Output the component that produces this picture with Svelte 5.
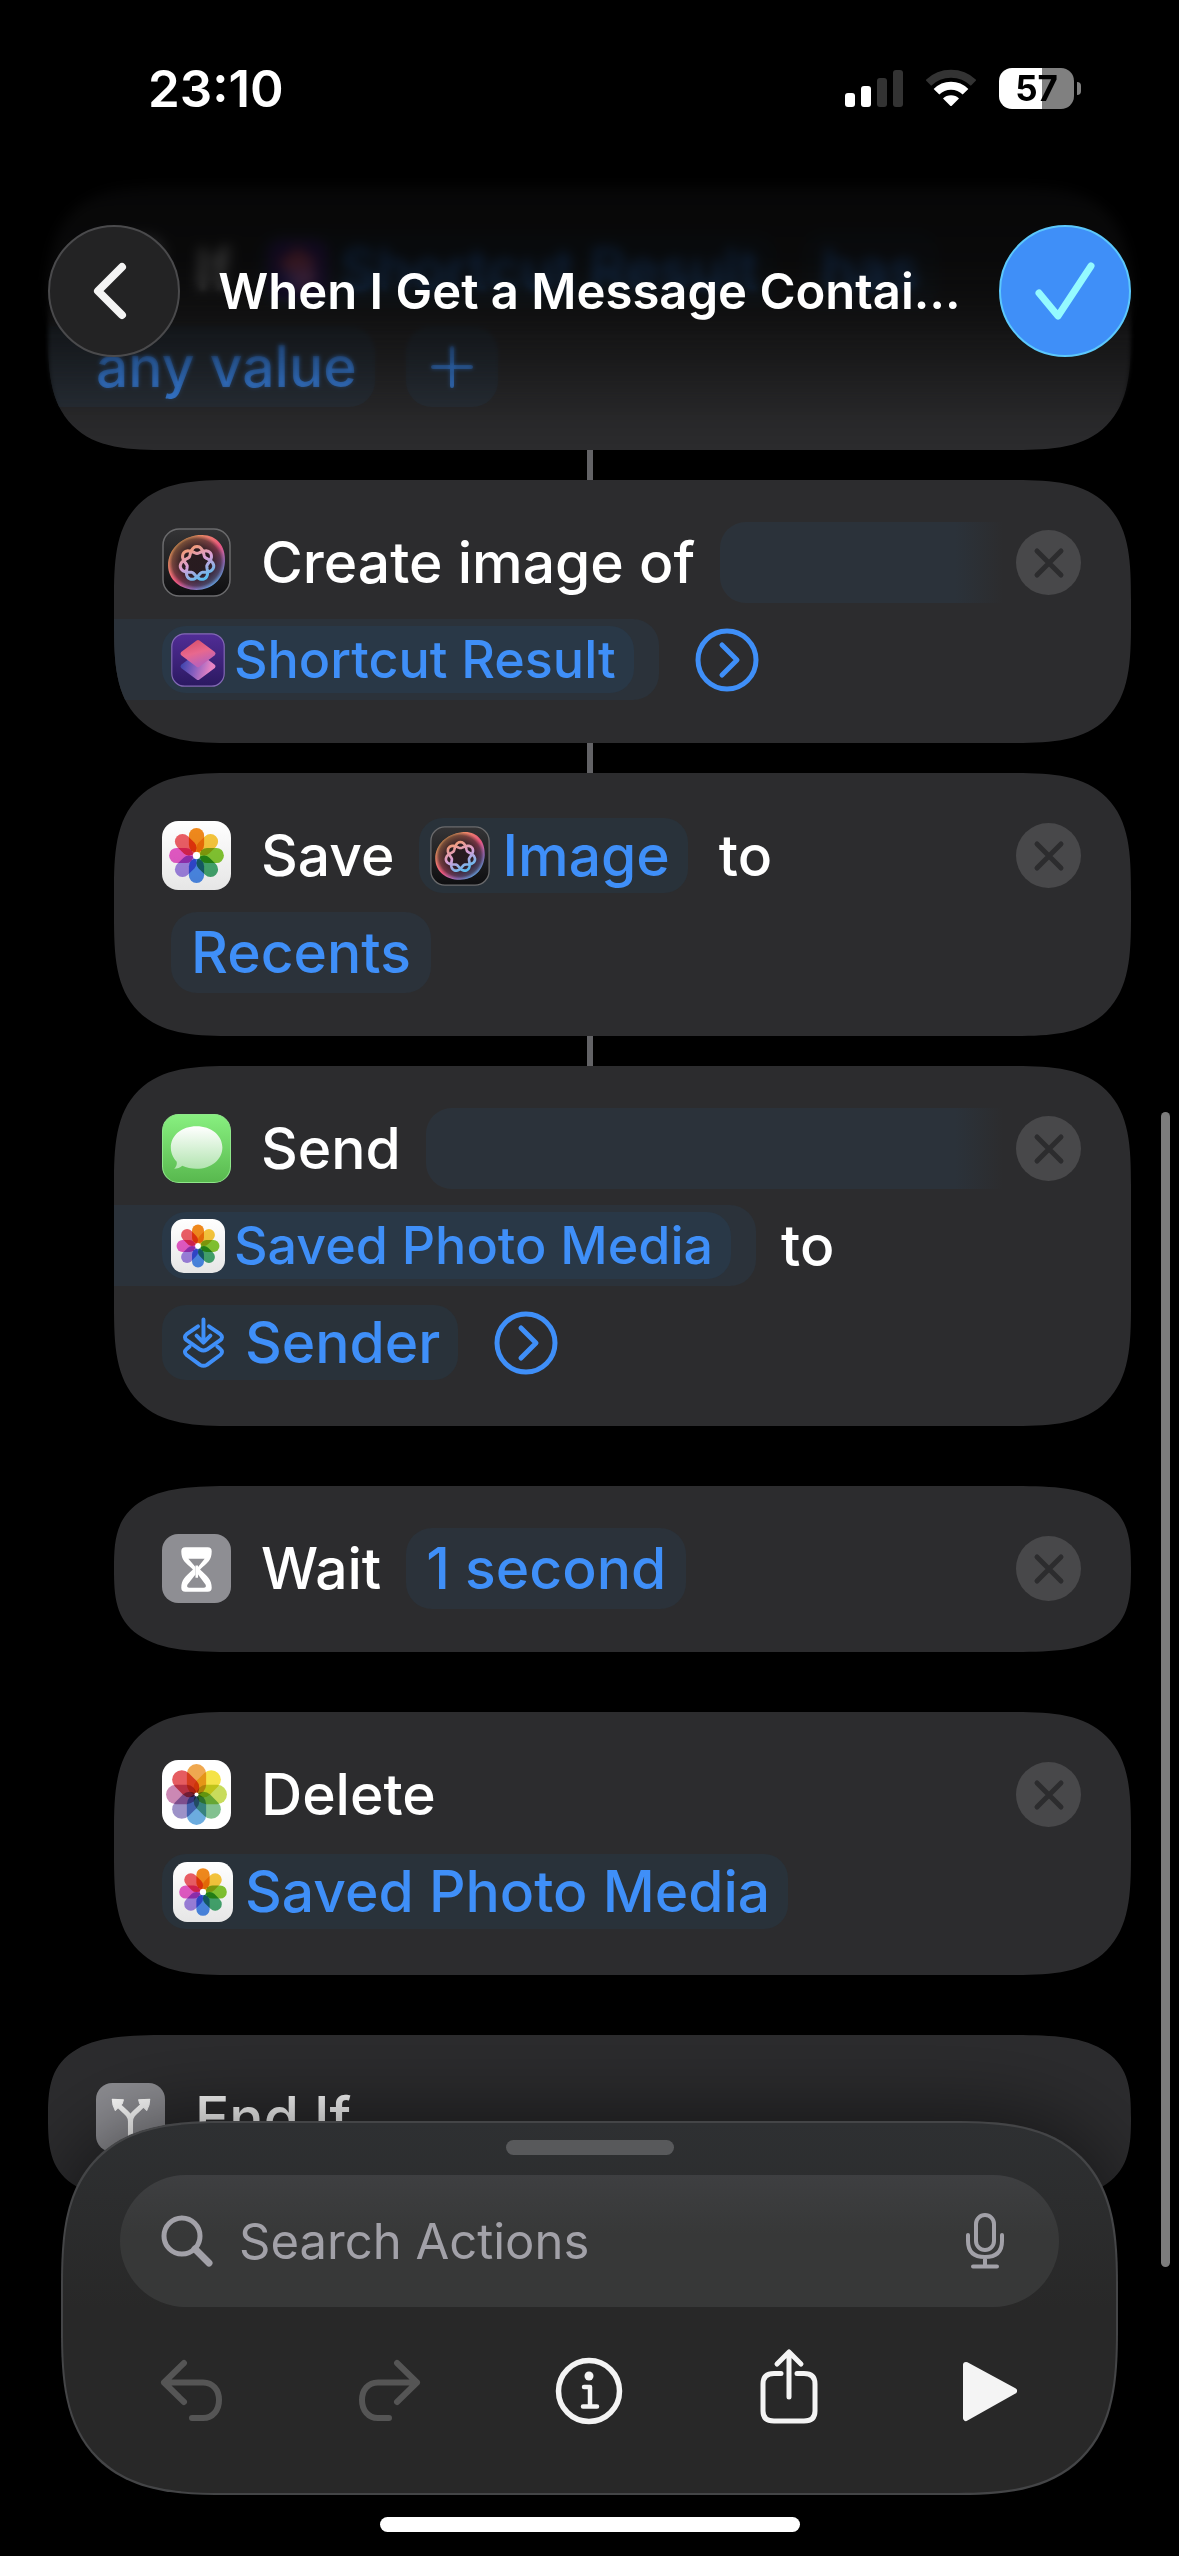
<script lang="ts">
    type Part = {
        kind: "icon" | "text" | "token" | "field" | "open" | "rest" | "more" | "plus" | "tail";
        label?: string;
        icon?: string;
    };
    type Action = { name: string; rows: Part[][]; outer?: boolean; linked?: boolean; fixed?: boolean };

    const actions: Action[] = [
        {
            name: "If",
            outer: true,
            linked: true,
            fixed: true,
            rows: [
                [
                    { kind: "icon", icon: "branch" },
                    { kind: "text", label: "If" },
                    { kind: "token", icon: "shortcuts", label: "Shortcut Result" },
                    { kind: "field", label: "has" },
                ],
                [
                    { kind: "tail", label: "any value" },
                    { kind: "plus", label: "Add condition" },
                ],
            ],
        },
        {
            name: "Create image",
            linked: true,
            rows: [
                [{ kind: "icon", icon: "playground" }, { kind: "text", label: "Create image of" }, { kind: "open" }],
                [{ kind: "rest", icon: "shortcuts", label: "Shortcut Result" }, { kind: "more" }],
            ],
        },
        {
            name: "Save",
            linked: true,
            rows: [
                [
                    { kind: "icon", icon: "photos" },
                    { kind: "text", label: "Save" },
                    { kind: "token", icon: "playground", label: "Image" },
                    { kind: "text", label: "to" },
                ],
                [{ kind: "field", label: "Recents" }],
            ],
        },
        {
            name: "Send",
            rows: [
                [{ kind: "icon", icon: "messages" }, { kind: "text", label: "Send" }, { kind: "open" }],
                [
                    { kind: "rest", icon: "photos", label: "Saved Photo Media" },
                    { kind: "text", label: "to" },
                ],
                [{ kind: "token", icon: "input", label: "Sender" }, { kind: "more" }],
            ],
        },
        {
            name: "Wait",
            rows: [
                [
                    { kind: "icon", icon: "hourglass" },
                    { kind: "text", label: "Wait" },
                    { kind: "field", label: "1 second" },
                ],
            ],
        },
        {
            name: "Delete",
            rows: [
                [
                    { kind: "icon", icon: "photosClassic" },
                    { kind: "text", label: "Delete" },
                ],
                [{ kind: "token", icon: "photos", label: "Saved Photo Media" }],
            ],
        },
        {
            name: "End If",
            outer: true,
            fixed: true,
            rows: [
                [
                    { kind: "icon", icon: "branch" },
                    { kind: "text", label: "End If" },
                ],
            ],
        },
    ];

    const petals = ["#f28a1c", "#f8c73c", "#84c832", "#45a970", "#4d8cec", "#a184e4", "#e75bc8", "#ee5f66"];
    const classicPetals = ["#efa850", "#f5e348", "#c8dc5c", "#82c190", "#6cacdf", "#9d92c8", "#cb88b4", "#e55c60"];

    // Seven-lobed knot: one strand that goes round twice
    const knot =
        "M" +
        Array.from({ length: 141 }, (_, i) => {
            const t = (i / 140) * Math.PI * 4;
            const r = 13.4 + 3.4 * Math.cos(3.5 * t);
            return `${(34.5 + r * Math.sin(t)).toFixed(1)} ${(35 - r * Math.cos(t)).toFixed(1)}`;
        }).join("L") +
        "Z";

    let query = $state("");
</script>

{#snippet appIcon(name: string)}
    <svg class="app-icon" viewBox="0 0 68 68" aria-hidden="true">
        {#if name === "playground"}
            <rect x="1" y="1" width="66" height="66" rx="16" fill="url(#night)" stroke="#6a6a6c" stroke-width="1.5" />
            <path d="M36 7C53 5 63 17 62 33C61 51 49 61 34 61C18 61 6 51 6 37C6 21 19 9 36 7Z" fill="url(#aura)" />
            <path d="M36 7C53 5 63 17 62 33C61 51 49 61 34 61C18 61 6 51 6 37C6 21 19 9 36 7Z" fill="url(#core)" />
            <path d={knot} fill="none" stroke="url(#strand)" stroke-width="3" />
        {:else if name === "shortcuts"}
            <rect x="1" y="1" width="66" height="66" rx="16" fill="url(#violet)" stroke="#8268b4" stroke-width="1.5" />
            <path d="M34 28L53 42L34 56L15 42Z" fill="url(#lower)" stroke="url(#lower)" stroke-width="6" stroke-linejoin="round" />
            <path d="M34 12L53 26L34 40L15 26Z" fill="url(#upper)" stroke="url(#upper)" stroke-width="6" stroke-linejoin="round" />
        {:else if name === "photos"}
            <rect width="68" height="68" rx="16" fill="url(#paper)" />
            {#each petals as color, i}
                <rect class="petal" x="26.5" y="7" width="15" height="24" rx="7.5" fill={color} transform="rotate({i * 45} 34 34)" />
            {/each}
            <circle cx="34" cy="34" r="3.5" fill="#fff" />
        {:else if name === "photosClassic"}
            <rect width="68" height="68" rx="16" fill="#fff" />
            {#each classicPetals as color, i}
                <rect class="petal" x="24.5" y="4" width="19" height="30" rx="9.5" fill={color} transform="rotate({i * 45} 34 34)" />
            {/each}
            <circle cx="34" cy="34" r="2" fill="#fff" />
        {:else if name === "messages"}
            <rect x="0.5" y="0.5" width="67" height="67" rx="16" fill="url(#green)" stroke="#8fe78a" />
            <path
                d="M34 12C48.500 12 59.500 21 59.500 33C59.500 45 48.500 54 34 54C29 54 24 53 20 51C18 53 15 54 12 54C14 52 15 49.500 14.500 47C11 43.500 8.700 38.500 8.700 33C8.700 21 19.500 12 34 12Z"
                fill="url(#bubble)"
            />
        {:else if name === "hourglass"}
            <rect width="68" height="68" rx="16" fill="#8e8e93" />
            <path
                fill="#fff"
                fill-rule="evenodd"
                d="M23 13H45Q49 13 49 17C49 26 45 28 37.500 35C45 42 49 45 49 53Q49 57 45 57H23Q19 57 19 53C19 45 23 42 30.500 35C23 28 19 26 19 17Q19 13 23 13ZM26 24.500L33 32.500V40L25 50Q24 53 27 53H41Q44 53 43 50L35.500 40V32.500L42 24.500Z"
            />
            <path fill="#fff" d="M33 31h2.500v12H33z" />
        {:else if name === "branch"}
            <rect width="68" height="68" rx="16" fill="#8e8e93" />
            <path d="M34 57V38C34 31 28 28 22 22M34 38C34 31 40 28 46 22" fill="none" stroke="#fff" stroke-width="5" />
            <path d="M16 16L27 16.500L26 20L21 25L19 27Q16 22 16 16ZM53 16L42 16.500L43 20L48 25L50 27Q53 22 53 16Z" fill="#fff" stroke="#fff" stroke-linejoin="round" />
        {:else if name === "input"}
            <g class="line" stroke-width="4" transform="translate(11 5) scale(1.12)">
                <path d="M21 2V25M14 18.500L21 25.500L28 18.500" />
                <path d="M15.500 9L4 17Q.5 20 4 23L17.500 32.500Q21 34.500 24.500 32.500L38 23Q41.500 20 38 17L26.500 9" />
                <path d="M7 29.500L4 32Q.5 35 4 38L17.500 48Q21 50 24.500 48L38 38Q41.500 35 38 32L35 29.500" />
            </g>
        {/if}
    </svg>
{/snippet}

<svg class="defs" width="0" height="0" aria-hidden="true">
    <defs>
        <linearGradient id="night" x2="0" y2="1"><stop stop-color="#343436" /><stop offset="1" stop-color="#0e0e10" /></linearGradient>
        <linearGradient id="aura" x1="0.1" y1="0.2" x2="0.8" y2="1">
            <stop stop-color="#f0a35a" /><stop offset="0.5" stop-color="#e8557e" /><stop offset="0.75" stop-color="#9a6fc0" /><stop offset="1" stop-color="#4fb2ea" />
        </linearGradient>
        <radialGradient id="core">
            <stop offset="0.45" stop-color="#241a1e" stop-opacity="0.98" /><stop offset="0.85" stop-color="#241a1e" stop-opacity="0.6" /><stop offset="1" stop-color="#241a1e" stop-opacity="0" />
        </radialGradient>
        <linearGradient id="strand" x1="0.2" y1="0" x2="0.7" y2="1">
            <stop stop-color="#f59a6a" /><stop offset="0.5" stop-color="#d9a0d8" /><stop offset="1" stop-color="#58bdf0" />
        </linearGradient>
        <linearGradient id="violet" x2="0" y2="1"><stop stop-color="#512d96" /><stop offset="1" stop-color="#2b1961" /></linearGradient>
        <linearGradient id="upper" x2="0.4" y2="1"><stop stop-color="#d9506c" /><stop offset="0.55" stop-color="#e8688e" /><stop offset="1" stop-color="#c062b4" /></linearGradient>
        <linearGradient id="lower" x2="1" y2="0.2"><stop stop-color="#3a44ac" /><stop offset="0.5" stop-color="#8b60c0" /><stop offset="1" stop-color="#e884c4" /></linearGradient>
        <linearGradient id="paper" x2="0" y2="1"><stop stop-color="#fff" /><stop offset="1" stop-color="#e6e6e6" /></linearGradient>
        <linearGradient id="green" x2="0" y2="1"><stop stop-color="#88f080" /><stop offset="1" stop-color="#58b84e" /></linearGradient>
        <linearGradient id="bubble" x2="0" y2="1"><stop stop-color="#fff" /><stop offset="1" stop-color="#b2e4b0" /></linearGradient>
    </defs>
</svg>

<header>
    <div class="status">
        <time>23:10</time>
        <div class="signals">
            <svg width="58" height="38" viewBox="0 0 58 38" role="img" aria-label="Signal, 2 of 4 bars">
                <g fill="#fff">
                    <rect y="24" width="10" height="14" rx="3" />
                    <rect x="16" y="17" width="10" height="21" rx="3" />
                    <rect x="32" y="9" width="10" height="29" rx="3" opacity="0.2" />
                    <rect x="48" y="1" width="10" height="37" rx="3" opacity="0.2" />
                </g>
            </svg>
            <svg width="50" height="38" viewBox="0 0 50 38" role="img" aria-label="Wi-Fi">
                <g class="arcs" stroke="#fff" stroke-width="8">
                    <path d="M2.400 14A32.500 32.500 0 0 1 47.600 14" opacity="0.2" />
                    <path d="M10.500 22.800A20.400 20.400 0 0 1 39.500 22.800" />
                </g>
                <path d="M17 29.500A11.300 11.300 0 0 1 33 29.500L26 36.500Q25 37.500 24 36.500Z" fill="#fff" />
            </svg>
            <div class="battery"><span>57</span></div>
        </div>
    </div>
    <nav>
        <button class="round back" aria-label="Back">
            <svg width="34" height="58" viewBox="0 0 34 58"><path d="M29 5L5 29L29 53" /></svg>
        </button>
        <h1>When I Get a Message Contai…</h1>
        <button class="round done" aria-label="Done">
            <svg width="60" height="58" viewBox="0 0 60 58"><path d="M4 31L23 54L56 4" /></svg>
        </button>
    </nav>
</header>

<main>
    {#each actions as action}
        <section class="card" class:outer={action.outer} class:linked={action.linked} aria-label={action.name}>
            <div class="body">
                {#each action.rows as row, i}
                    <div class="row">
                        {#each row as part}
                            {#if part.kind === "icon"}
                                <span class="lead">{@render appIcon(part.icon)}</span>
                            {:else if part.kind === "text"}
                                <span class="word">{part.label}</span>
                            {:else if part.kind === "token"}
                                <button class="token">{@render appIcon(part.icon)}{part.label}</button>
                            {:else if part.kind === "field"}
                                <button class="field">{part.label}</button>
                            {:else if part.kind === "tail"}
                                <button class="field tail">{part.label}</button>
                            {:else if part.kind === "open"}
                                <span class="open"></span>
                            {:else if part.kind === "rest"}
                                <span class="rest">
                                    <button class="token small">{@render appIcon(part.icon)}{part.label}</button>
                                </span>
                            {:else if part.kind === "plus"}
                                <button class="field plus" aria-label={part.label}>
                                    <svg width="42" height="42" viewBox="0 0 42 42"><path d="M21 2V40M2 21H40" /></svg>
                                </button>
                            {:else}
                                <button class="more" aria-label="Show more">
                                    <svg width="64" height="64" viewBox="0 0 64 64">
                                        <circle cx="32" cy="32" r="29" />
                                        <path d="M27 17L42 32L27 47" />
                                    </svg>
                                </button>
                            {/if}
                        {/each}
                        {#if i === 0 && !action.fixed}
                            <button class="remove" aria-label="Remove {action.name}">
                                <svg width="32" height="32" viewBox="0 0 32 32"><path d="M4 4L28 28M28 4L4 28" /></svg>
                            </button>
                        {/if}
                    </div>
                {/each}
            </div>
        </section>
    {/each}
</main>

<div class="scrollbar"></div>

<footer>
    <div class="dock">
        <div class="grabber"></div>
        <label class="search">
            <svg width="54" height="54" viewBox="0 0 54 54" aria-hidden="true">
                <circle cx="22" cy="22" r="18" stroke-width="5" />
                <path d="M35 35L49 49" stroke-width="7" />
            </svg>
            <input type="text" placeholder="Search Actions" aria-label="Search Actions" bind:value={query} />
            <svg width="40" height="56" viewBox="0 0 40 56" aria-hidden="true" stroke-width="4">
                <rect x="11" y="2" width="18" height="35" rx="9" />
                <path d="M3 22V28Q3 44 20 44Q37 44 37 28V22M20 44V52M8 53.500H32" />
            </svg>
        </label>
        <div class="toolbar">
            <button aria-label="Undo" disabled>
                <svg width="64" height="64" viewBox="0 0 64 64"><path d="M25 4L5 23.500L25 43M5 23.500H44C54 23.500 60 31 60 41S54 59 44 59H33" /></svg>
            </button>
            <button aria-label="Redo" disabled>
                <svg width="64" height="64" viewBox="0 0 64 64"><path d="M39 4L59 23.500L39 43M59 23.500H20C10 23.500 4 31 4 41S10 59 20 59H31" /></svg>
            </button>
            <button aria-label="Info">
                <svg width="68" height="68" viewBox="0 0 68 68">
                    <circle cx="34" cy="34" r="30.500" stroke-width="5.500" />
                    <circle cx="34" cy="19" r="4.500" class="solid" stroke="none" />
                    <path d="M29 30H35V49M28 49.500H42" stroke-width="4.500" />
                </svg>
            </button>
            <button aria-label="Share">
                <svg width="64" height="92" viewBox="0 0 64 92">
                    <path d="M24 28.500H17Q6 28.500 6 39V66Q6 76 17 76H47Q58 76 58 66V39Q58 28.500 47 28.500H40M32 52V8M20 19L32 7L44 19" stroke-width="5" />
                </svg>
            </button>
            <button aria-label="Run">
                <svg width="60" height="64" viewBox="0 0 60 64"><path class="solid" d="M8 6L56 32L8 59Z" stroke-width="6" /></svg>
            </button>
        </div>
    </div>
    <div class="home"></div>
</footer>

<style>
    :global(body) {
        background: #000;
        color: #fff;
        font-family: Inter, "Liberation Sans", sans-serif;
        font-size: 57px;
        font-weight: 500;
        overflow: hidden;
    }

    :global(#app) {
        --blue: #3f8ff8;
        --card: #2c2c2e;
        --tint: #2b323a;
    }

    button {
        border: 0;
        padding: 0;
        background: none;
        color: inherit;
        font: inherit;
    }

    svg {
        display: block;
        flex: none;
        fill: none;
        stroke-linecap: round;
        stroke-linejoin: round;
    }

    .defs {
        position: absolute;
    }

    header {
        position: fixed;
        inset: 0 0 auto;
        z-index: 2;
        padding-bottom: 94px;
        background: linear-gradient(
            rgba(0, 0, 0, 0.84) 40%,
            rgba(0, 0, 0, 0.78) 58%,
            rgba(0, 0, 0, 0.62) 69%,
            rgba(0, 0, 0, 0.38) 80%,
            rgba(0, 0, 0, 0.12) 91%,
            transparent
        );

        /* progressive blur of the list that scrolls beneath */
        &::before,
        &::after {
            content: "";
            position: absolute;
            inset: 0;
            z-index: -1;
            backdrop-filter: blur(2px);
            mask: linear-gradient(#000 75%, transparent 92%);
        }

        &::after {
            backdrop-filter: blur(6px);
            mask: linear-gradient(#000 62%, transparent 74%);
        }
    }

    .status {
        display: flex;
        align-items: center;
        justify-content: space-between;
        height: 176px;
        padding: 0 105px 0 148px;
        font-size: 51px;
        font-weight: 600;
    }

    .signals {
        display: flex;
        align-items: center;
        gap: 23px;
    }

    .arcs {
        stroke-linecap: butt;
    }

    .battery {
        position: relative;
        width: 75px;
        height: 41px;
        border-radius: 13px;
        background: linear-gradient(90deg, #fff 57%, #808080 57%);
        color: #000;
        font-size: 35px;
        font-weight: 700;
        line-height: 41px;
        text-align: center;

        &::after {
            content: "";
            position: absolute;
            left: 78px;
            top: 14px;
            width: 4px;
            height: 13px;
            border-radius: 0 8px 8px 0;
            background: #808080;
        }
    }

    nav {
        display: flex;
        align-items: center;
        gap: 32px;
        padding: 49px 48px 0;
    }

    h1 {
        flex: 1;
        margin: 0;
        font-size: 49px;
        font-weight: 600;
        text-align: center;
        white-space: nowrap;
    }

    .round {
        display: grid;
        place-items: center;
        flex: none;
        box-sizing: border-box;
        width: 132px;
        height: 132px;
        border-radius: 50%;
    }

    .back {
        border: 2px solid #4a4a4c;
        background: #232324;
        padding-right: 8px;
        stroke: #f4f4f4;
        stroke-width: 8;
    }

    .done {
        border: 2px solid #5cc8fc;
        background: var(--blue);
        stroke: #94faff;
        stroke-width: 7;
    }

    main {
        padding: 187px 48px 0;
    }

    .card {
        position: relative;
        margin: 0 0 60px 66px;

        &.outer {
            margin-left: 0;
        }

        &.linked {
            margin-bottom: 30px;
        }

        /* connector line down to the next action */
        &.linked::after {
            content: "";
            position: absolute;
            top: 100%;
            right: calc(50vw - 51px);
            width: 6px;
            height: 30px;
            background: #636366;
        }
    }

    .body {
        display: flex;
        flex-direction: column;
        gap: 16px;
        padding: 42px 50px 43px 48px;
        overflow: hidden;
        border-radius: 120px / min(120px, 50%);
        corner-shape: superellipse(1.6);
        background: var(--card);
    }

    .row {
        display: flex;
        align-items: center;
        gap: 25px;
        height: 81px;
        white-space: nowrap;
    }

    .app-icon {
        isolation: isolate;
        width: 60px;
        height: 60px;
    }

    .petal {
        mix-blend-mode: multiply;
    }

    .line {
        stroke: var(--blue);
    }

    .lead {
        margin-right: 5px;

        & .app-icon {
            width: 69px;
            height: 69px;
        }
    }

    .token,
    .field {
        display: flex;
        align-items: center;
        gap: 12px;
        height: 75px;
        padding: 0 18px 0 11px;
        border-radius: 24px;
        background: #29323a;
        color: var(--blue);
    }

    .token + .word {
        margin-left: 6px;
    }

    .field {
        height: 81px;
        padding: 0 20px;
        border-radius: 26px;
        background: var(--tint);

        .row > &:first-child {
            margin-left: 9px;
        }
    }

    .token.small {
        gap: 9px;
        height: 67px;
        padding-left: 9px;
        background: #293847;
        font-size: 52px;

        & .app-icon {
            width: 54px;
            height: 54px;
        }
    }

    /* a field that wraps: it fades out at the row's end and goes on from the card's edge */
    .open {
        flex: 1;
        height: 81px;
        margin-right: -12px;
        border-radius: 26px 0 0 26px;
        background: linear-gradient(90deg, var(--tint) calc(100% - 48px), transparent);
    }

    .rest,
    .row > .tail:first-child {
        display: flex;
        align-items: center;
        height: 81px;
        margin-left: -48px;
        padding: 0 25px 0 48px;
        border-radius: 0 26px 26px 0;
        background: var(--tint);
    }

    .row > .tail:first-child {
        padding-right: 18px;
    }

    .plus {
        padding: 0 25px;
        margin-left: 6px;
        stroke: var(--blue);
        stroke-width: 4;
    }

    .more {
        margin-left: 11px;
        stroke: var(--blue);
        stroke-width: 5;
    }

    .remove {
        display: grid;
        place-items: center;
        flex: none;
        width: 65px;
        height: 65px;
        margin-left: auto;
        border-radius: 50%;
        background: #48484a;
        stroke: var(--card);
        stroke-width: 5;
    }

    .scrollbar {
        position: fixed;
        top: 43.5%;
        right: 9px;
        z-index: 4;
        width: 9px;
        height: 45.2%;
        border-radius: 5px;
        background: #7c7c7c;
    }

    footer {
        position: fixed;
        inset: auto 0 0;
        z-index: 3;
        display: flex;
        flex-direction: column;
        align-items: center;
        gap: 22px;
        padding: 0 61px 24px;
    }

    .dock {
        display: flex;
        flex-direction: column;
        align-items: center;
        box-sizing: border-box;
        width: 100%;
        padding: 17px 0 18px;
        border: 2px solid #444547;
        border-radius: 166px;
        corner-shape: superellipse(1.5);
        background: linear-gradient(#2e3032, #2c2d2e 20%, #282828 50%);
        box-shadow: 0 0 90px rgba(0, 0, 0, 0.6);
    }

    .grabber {
        width: 168px;
        height: 15px;
        border-radius: 8px;
        background: #58595b;
    }

    .search {
        display: flex;
        align-items: center;
        gap: 25px;
        box-sizing: border-box;
        width: calc(100% - 114px);
        height: 132px;
        margin-top: 20px;
        padding: 0 54px 0 40px;
        border-radius: 66px;
        background: linear-gradient(#3e3f41, #373838 45%);
        stroke: #a2a1a8;
    }

    input {
        flex: 1;
        min-width: 0;
        padding: 0;
        border: 0;
        outline: 0;
        background: none;
        color: #fff;
        font: inherit;
        font-size: 49px;
        font-weight: 400;

        &::placeholder {
            color: #a2a1a8;
            opacity: 1;
        }
    }

    .toolbar {
        display: grid;
        grid-template-columns: repeat(5, 1fr);
        box-sizing: border-box;
        width: 100%;
        height: 168px;
        padding: 0 28px;

        & button {
            display: grid;
            place-items: center;
            stroke: #f4f4f4;
            stroke-width: 6;
        }

        & button:disabled {
            stroke: #555;
        }

        & .solid {
            fill: #f4f4f4;
        }
    }

    .home {
        width: 420px;
        height: 15px;
        border-radius: 8px;
        background: #fff;
    }
</style>
